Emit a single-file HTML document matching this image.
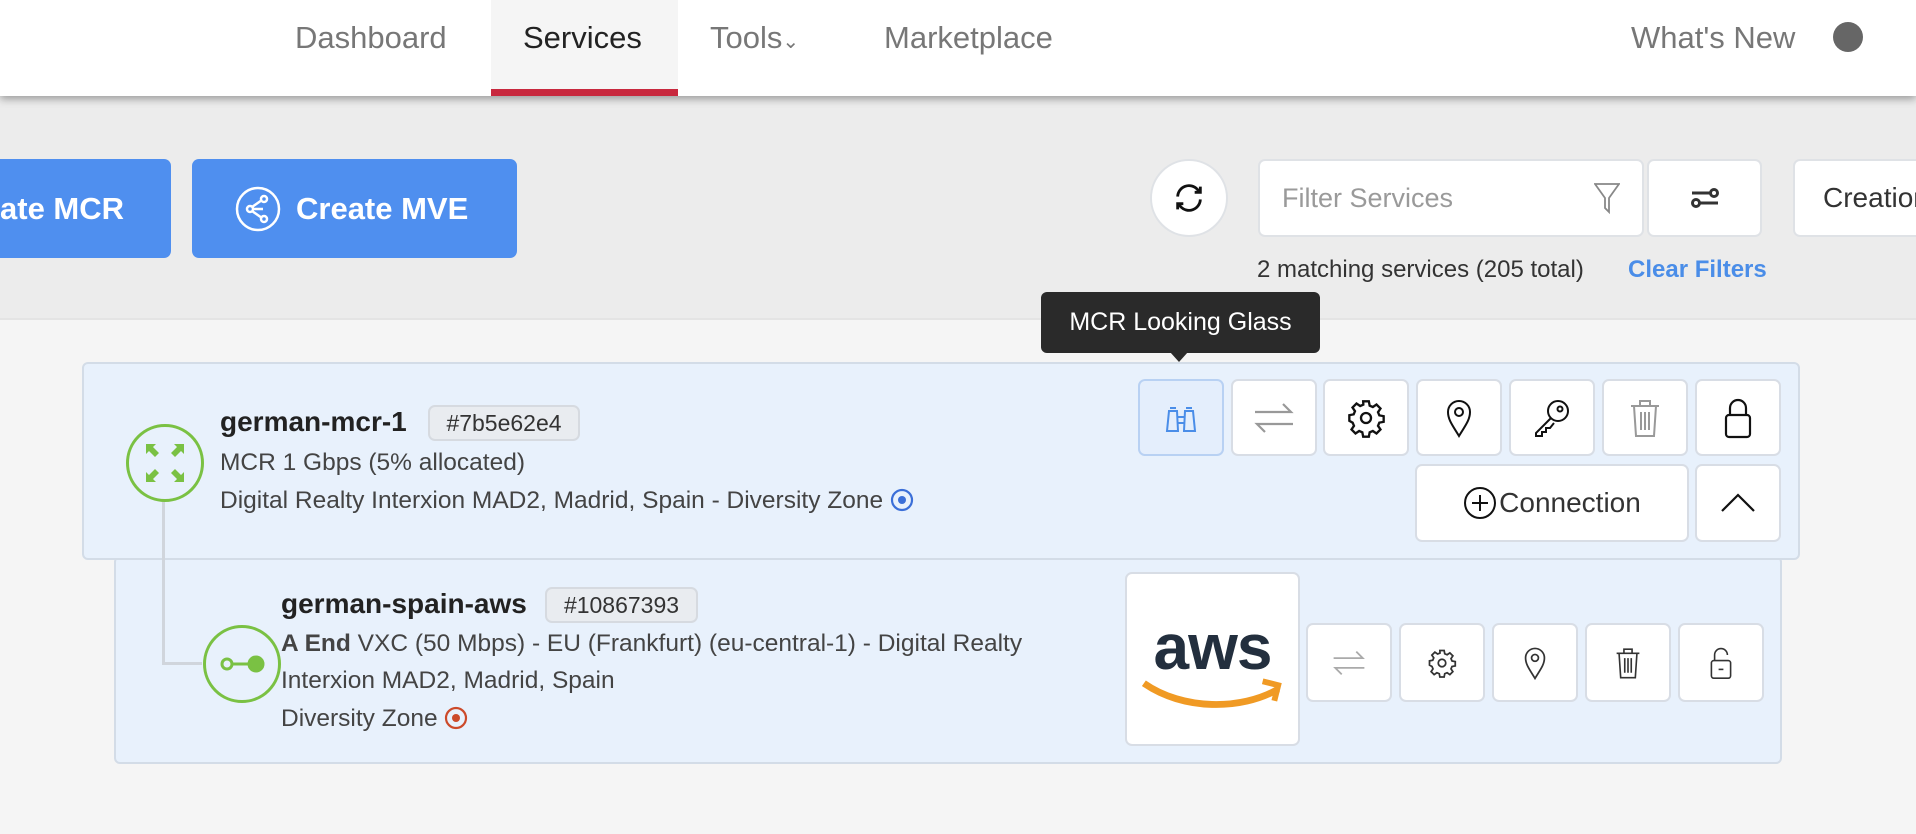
<!DOCTYPE html>
<html><head><meta charset="utf-8"><style>
*{box-sizing:border-box;margin:0;padding:0}
body{width:1916px;height:834px;overflow:hidden;background:#f5f5f5;font-family:"Liberation Sans",sans-serif;position:relative;color:#333}
.a{position:absolute}
.nav{left:0;top:0;width:1916px;height:96px;background:#fff;box-shadow:0 3px 8px rgba(0,0,0,.35);z-index:3}
.ni{position:absolute;top:18px;font-size:31px;color:#777}
.gray{left:0;top:96px;width:1916px;height:224px;background:#ececec;border-bottom:2px solid #e4e4e4}
.btnb{background:#4f8fef;border-radius:7px;color:#fff;font-size:31px;font-weight:bold;display:flex;align-items:center}
.wb{background:#fff;border:2px solid #dfe2e6;border-radius:7px;display:flex;align-items:center;justify-content:center}
.card{background:#e8f1fc;border:2px solid #d3dce7;border-radius:6px}
.ib{position:absolute;width:86px;height:77px;background:#fff;border:2px solid #d8dde5;border-radius:7px;display:flex;align-items:center;justify-content:center}
.tag{position:absolute;background:#e9ecf0;border:2px solid #d6dae0;border-radius:7px;font-size:23px;color:#333;display:flex;align-items:center;justify-content:center}
.t{position:absolute;font-size:24.5px;color:#444;white-space:nowrap}
</style></head><body>
<div class="a nav">
 <div class="ni" style="left:295px;top:20px">Dashboard</div>
 <div class="a" style="left:491px;top:0;width:187px;height:96px;background:#f5f5f5"></div>
 <div class="a" style="left:491px;top:89px;width:187px;height:7px;background:#c8283e"></div>
 <div class="ni" style="left:523px;top:20px;color:#222">Services</div>
 <div class="ni" style="left:710px;top:20px">Tools<span style="font-size:20px">&#8964;</span></div>
 <div class="ni" style="left:884px;top:20px">Marketplace</div>
 <div class="ni" style="left:1631px;top:20px">What's New</div>
 <div class="a" style="left:1833px;top:22px;width:30px;height:30px;border-radius:50%;background:#666"></div>
</div>
<div class="a gray"></div>
<div class="a btnb" style="left:-10px;top:159px;width:181px;height:99px;padding-left:10px">ate MCR</div>
<div class="a btnb" style="left:192px;top:159px;width:325px;height:99px;padding-left:42px">
 <svg width="48" height="48" viewBox="0 0 48 48" fill="none" stroke="#fff" stroke-width="2.5"><circle cx="24" cy="24" r="21"/><circle cx="16" cy="24" r="3"/><circle cx="30" cy="14" r="3"/><circle cx="30" cy="34" r="3"/><path d="M19 24h10M18 22l10-7M18 26l10 7"/></svg>
 <span style="margin-left:14px">Create MVE</span></div>
<div class="a wb" style="left:1150px;top:159px;width:78px;height:78px;border-radius:50%">
 <svg width="34" height="34" viewBox="0 0 24 24" fill="none" stroke="#111" stroke-width="2"><path d="M4 11a8 8 0 0 1 14-5l2 2M20 4v4h-4M20 13a8 8 0 0 1-14 5l-2-2M4 20v-4h4"/></svg></div>
<div class="a wb" style="left:1258px;top:159px;width:386px;height:78px;justify-content:space-between;padding:0 22px">
 <span style="font-size:27px;color:#9a9a9a">Filter Services</span>
 <svg width="26" height="32" viewBox="0 0 26 32" fill="none" stroke="#888" stroke-width="1.8"><path d="M1 2h24L15 16v14l-4-4V16z"/></svg></div>
<div class="a wb" style="left:1647px;top:159px;width:115px;height:78px">
 <svg width="30" height="24" viewBox="0 0 30 24" fill="none" stroke="#333" stroke-width="3"><path d="M2 7h18M10 17h18"/><circle cx="24" cy="7" r="3.5"/><circle cx="6" cy="17" r="3.5"/></svg></div>
<div class="a wb" style="left:1793px;top:159px;width:160px;height:78px;justify-content:flex-start;padding-left:28px;font-size:28px;color:#333">Creation</div>
<div class="a" style="left:1257px;top:256px;font-size:24px;color:#333">2 matching services (205 total)</div>
<div class="a" style="left:1628px;top:256px;font-size:24px;color:#4a8de8;font-weight:bold">Clear Filters</div>

<div class="a card" style="left:114px;top:556px;width:1668px;height:208px"></div>
<div class="a card" style="left:82px;top:362px;width:1718px;height:198px"></div>
<div class="a" style="left:1041px;top:292px;width:279px;height:61px;background:#2a2a2a;border-radius:6px;color:#fff;font-size:25px;display:flex;align-items:center;justify-content:center">MCR Looking Glass</div>
<div class="a" style="left:1170px;top:352px;width:0;height:0;border-left:9px solid transparent;border-right:9px solid transparent;border-top:10px solid #2a2a2a"></div>

<div class="a" style="left:162px;top:500px;width:3px;height:165px;background:#d0d5dc"></div>
<div class="a" style="left:162px;top:662px;width:40px;height:3px;background:#d0d5dc"></div>
<div class="a" style="left:126px;top:424px;width:78px;height:78px;border-radius:50%;border:3px solid #7ac143;background:#e8f1fc;display:flex;align-items:center;justify-content:center">
 <svg width="42" height="42" viewBox="0 0 42 42" fill="#7ac143"><path d="M2 2h10l-3 3 6 6-4 4-6-6-3 3zM40 2v10l-3-3-6 6-4-4 6-6-3-3zM2 40V30l3 3 6-6 4 4-6 6 3 3zM40 40H30l3-3-6-6 4-4 6 6 3-3z"/></svg></div>
<div class="a" style="left:203px;top:625px;width:78px;height:78px;border-radius:50%;border:3px solid #7ac143;background:#e8f1fc;display:flex;align-items:center;justify-content:center">
 <svg width="46" height="20" viewBox="0 0 46 20" fill="none" stroke="#7ac143" stroke-width="3"><circle cx="8" cy="10" r="5"/><path d="M13 10h18"/><circle cx="37" cy="10" r="7" fill="#7ac143"/></svg></div>

<div class="t" style="left:220px;top:406px;font-size:28px;font-weight:bold;color:#222">german-mcr-1</div>
<div class="tag" style="left:428px;top:405px;width:152px;height:36px">#7b5e62e4</div>
<div class="t" style="left:220px;top:449px">MCR 1 Gbps (5% allocated)</div>
<div class="t" style="left:220px;top:487px">Digital Realty Interxion MAD2, Madrid, Spain - Diversity Zone <svg width="24" height="24" viewBox="0 0 24 24" style="vertical-align:-4px"><circle cx="12" cy="12" r="10" fill="none" stroke="#3b6fd8" stroke-width="2.2"/><circle cx="12" cy="12" r="4" fill="#3b6fd8"/></svg></div>

<div class="t" style="left:281px;top:588px;font-size:28px;font-weight:bold;color:#222">german-spain-aws</div>
<div class="tag" style="left:545px;top:587px;width:153px;height:36px">#10867393</div>
<div class="t" style="left:281px;top:630px"><b style="color:#444">A End</b> VXC (50 Mbps) - EU (Frankfurt) (eu-central-1) - Digital Realty</div>
<div class="t" style="left:281px;top:667px">Interxion MAD2, Madrid, Spain</div>
<div class="t" style="left:281px;top:705px">Diversity Zone <svg width="24" height="24" viewBox="0 0 24 24" style="vertical-align:-4px"><circle cx="12" cy="12" r="10" fill="none" stroke="#cc4a2a" stroke-width="2.2"/><circle cx="12" cy="12" r="4" fill="#cc4a2a"/></svg></div>

<!-- MCR buttons -->
<div class="ib" style="left:1138px;top:379px;background:#e4eefc;border-color:#b8d1f3">
 <svg width="34" height="34" viewBox="0 0 34 34" fill="none" stroke="#4a8de8" stroke-width="2"><path d="M6 7h6M22 7h6M5 10h8l1 20H3zM21 10h8l2 20H20zM13 16h8M13 22h8"/></svg></div>
<div class="ib" style="left:1231px;top:379px"><svg width="42" height="36" viewBox="0 0 42 36" fill="none" stroke="#999" stroke-width="2.2"><path d="M2 12h36l-8-8M40 24H4l8 8"/></svg></div>
<div class="ib" style="left:1323px;top:379px"><svg width="40" height="40" viewBox="0 0 24 24" fill="none" stroke="#111" stroke-width="1.4"><circle cx="12" cy="12" r="3"/><path d="M10.3 2h3.4l.5 2.6 1.9.8 2.2-1.5 2.4 2.4-1.5 2.2.8 1.9 2.6.5v3.4l-2.6.5-.8 1.9 1.5 2.2-2.4 2.4-2.2-1.5-1.9.8-.5 2.6h-3.4l-.5-2.6-1.9-.8-2.2 1.5-2.4-2.4 1.5-2.2-.8-1.9L2 13.7v-3.4l2.6-.5.8-1.9-1.5-2.2 2.4-2.4 2.2 1.5 1.9-.8z"/></svg></div>
<div class="ib" style="left:1416px;top:379px"><svg width="28" height="40" viewBox="0 0 28 40" fill="none" stroke="#111" stroke-width="2"><path d="M14 38C8 28 3 22 3 14a11 11 0 0 1 22 0c0 8-5 14-11 24z"/><circle cx="14" cy="14" r="4"/></svg></div>
<div class="ib" style="left:1509px;top:379px"><svg width="40" height="40" viewBox="0 0 40 40" fill="none" stroke="#111" stroke-width="2"><circle cx="26" cy="13" r="10"/><circle cx="28" cy="11" r="2.5"/><path d="M19 20L4 35v3h6v-4h4v-4h4l4-5"/></svg></div>
<div class="ib" style="left:1602px;top:379px"><svg width="32" height="40" viewBox="0 0 32 40" fill="none" stroke="#999" stroke-width="2"><path d="M2 8h28M11 8V3h10v5M5 8l2 30h18l2-30M12 14v18M16 14v18M20 14v18"/></svg></div>
<div class="ib" style="left:1695px;top:379px"><svg width="30" height="42" viewBox="0 0 30 42" fill="none" stroke="#111" stroke-width="2.2"><path d="M7 18v-7a8 8 0 0 1 16 0v7"/><rect x="3" y="18" width="24" height="22" rx="3"/></svg></div>
<div class="ib" style="left:1415px;top:464px;width:274px;height:78px;font-size:28px;color:#333">
 <svg width="34" height="34" viewBox="0 0 34 34" fill="none" stroke="#111" stroke-width="2"><circle cx="17" cy="17" r="15"/><path d="M17 9v16M9 17h16"/></svg><span style="margin-left:2px">Connection</span></div>
<div class="ib" style="left:1695px;top:464px;height:78px"><svg width="36" height="20" viewBox="0 0 36 20" fill="none" stroke="#111" stroke-width="2.2"><path d="M2 18L18 2l16 16"/></svg></div>

<!-- child -->
<div class="ib" style="left:1125px;top:572px;width:175px;height:174px;flex-direction:column;padding-top:12px">
 <div style="font-size:64px;font-weight:bold;color:#232f3e;line-height:56px;letter-spacing:-1px">aws</div>
 <svg width="146" height="36" viewBox="0 0 150 36" fill="none" stroke="#f09a24" stroke-width="7"><path d="M4 8c40 28 100 28 138 6"/><path d="M126 6l16 4-4 16" stroke-width="6"/></svg></div>
<div class="ib" style="left:1306px;top:623px;height:79px"><svg width="34" height="30" viewBox="0 0 42 36" fill="none" stroke="#aaa" stroke-width="2.2"><path d="M2 12h36l-8-8M40 24H4l8 8"/></svg></div>
<div class="ib" style="left:1399px;top:623px;height:79px"><svg width="30" height="30" viewBox="0 0 24 24" fill="none" stroke="#333" stroke-width="1.4"><circle cx="12" cy="12" r="3"/><path d="M10.3 2h3.4l.5 2.6 1.9.8 2.2-1.5 2.4 2.4-1.5 2.2.8 1.9 2.6.5v3.4l-2.6.5-.8 1.9 1.5 2.2-2.4 2.4-2.2-1.5-1.9.8-.5 2.6h-3.4l-.5-2.6-1.9-.8-2.2 1.5-2.4-2.4 1.5-2.2-.8-1.9L2 13.7v-3.4l2.6-.5.8-1.9-1.5-2.2 2.4-2.4 2.2 1.5 1.9-.8z"/></svg></div>
<div class="ib" style="left:1492px;top:623px;height:79px"><svg width="24" height="36" viewBox="0 0 28 40" fill="none" stroke="#333" stroke-width="2"><path d="M14 38C8 28 3 22 3 14a11 11 0 0 1 22 0c0 8-5 14-11 24z"/><circle cx="14" cy="14" r="4"/></svg></div>
<div class="ib" style="left:1585px;top:623px;height:79px"><svg width="26" height="34" viewBox="0 0 32 40" fill="none" stroke="#333" stroke-width="2"><path d="M2 8h28M11 8V3h10v5M5 8l2 30h18l2-30M12 14v18M16 14v18M20 14v18"/></svg></div>
<div class="ib" style="left:1678px;top:623px;height:79px"><svg width="24" height="36" viewBox="0 0 30 42" fill="none" stroke="#333" stroke-width="2"><path d="M7 18v-7a8 8 0 0 1 16 0"/><rect x="3" y="18" width="24" height="22" rx="3"/><path d="M12 29h6"/></svg></div>
</body></html>
